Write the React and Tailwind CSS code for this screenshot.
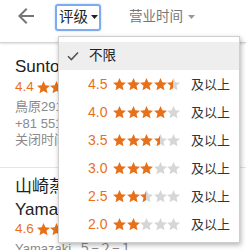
const STAR = "M12 2l2.9 6.6 7.1.6-5.4 4.7 1.6 7.1L12 17.3 5.8 21l1.6-7.1L2 9.2l7.1-.6z";

function Star({ fill, id, size }) {
  // fill: 1 full, 0.5 half, 0 empty
  return (
    <svg viewBox="2 2 20 20" className={size + " shrink-0"}>
      <defs>
        <linearGradient id={id}>
          <stop offset={fill * 100 + "%"} stopColor="#e7711b" />
          <stop offset={fill * 100 + "%"} stopColor="#d6d6d6" />
        </linearGradient>
      </defs>
      <path d={STAR} fill={`url(#${id})`} />
    </svg>
  );
}

function Stars({ value, id, size = "w-[13px] h-[13px]" }) {
  return (
    <span className="flex gap-[0.5px]">
      {[0, 1, 2, 3, 4].map((i) => {
        const f = value - i >= 1 ? 1 : value - i >= 0.5 ? 0.5 : 0;
        return <Star key={i} fill={f} id={`${id}-${i}`} size={size} />;
      })}
    </span>
  );
}

const font = { fontFamily: '"Liberation Sans", Arial, "Noto Sans CJK SC", sans-serif' };

function Caret({ color }) {
  return (
    <svg width="7" height="4" viewBox="0 0 7 4">
      <path d="M0 0h7L3.5 4z" fill={color} />
    </svg>
  );
}

export default function App() {
  const ratings = [4.5, 4.0, 3.5, 3.0, 2.5, 2.0];
  return (
    <div className="relative w-[246px] h-[250px] overflow-hidden bg-white" style={font}>
      {/* header */}
      <div className="h-[43px] border-b border-[#d4d4d4] shadow-[0_1px_2px_rgba(0,0,0,0.12)]">
        <div className="h-[34px] flex items-center">
          <svg viewBox="0 0 24 24" className="w-6 h-6 ml-[14px] -mt-[2px]" fill="#757575">
            <path d="M20 11H7.83l5.59-5.59L12 4l-8 8 8 8 1.41-1.41L7.83 13H20v-2z" />
          </svg>
          <div className="ml-[17px] h-[27px] flex items-center gap-[3px] pl-[2px] pr-[1px] border-2 border-[#7eaaf0] rounded-[3px] shadow-[0_0_2px_#a9c7f7]">
            <span className="text-[14.5px] leading-none text-[#222]">评级</span>
            <Caret color="#222" />
          </div>
          <div className="ml-[28px] flex items-center gap-[5px]">
            <span className="text-[13.5px] leading-none text-[#777]">营业时间</span>
            <Caret color="#999" />
          </div>
        </div>
      </div>

      {/* list */}
      <div className="px-[15px] pt-[14px] pb-[18px] border-b border-[#e4e4e4] whitespace-nowrap">
        <div className="text-[17px] leading-[20px] text-[#212121]">Suntory Hakushu Distillery</div>
        <div className="flex items-center gap-[3px] h-[20px]">
          <span className="text-[13.5px] text-[#e7711b]">4.4</span>
          <Stars value={4.5} id="s1" />
        </div>
        <div className="mt-[2px] text-[13px] leading-[16.5px] text-[#8a8a8a]">
          <div>鳥原2913-1</div>
          <div>+81 551-35-2211</div>
          <div>关闭时间：16:30</div>
        </div>
      </div>
      <div className="px-[15px] pt-[7px] whitespace-nowrap">
        <div className="text-[17px] leading-[23px] text-[#212121]">
          <div>山崎蒸溜所</div>
          <div>Yamazaki Distillery</div>
        </div>
        <div className="flex items-center gap-[3px] h-[18px]">
          <span className="text-[13.5px] text-[#e7711b]">4.6</span>
          <Stars value={4.5} id="s2" />
        </div>
        <div className="text-[13px] leading-[20px] text-[#8a8a8a]">Yamazaki, ５−２−１</div>
      </div>

      {/* dropdown menu */}
      <div className="absolute left-[58px] top-[36px] w-[182px] bg-white border border-[#cfcfcf] shadow-[1px_2px_5px_rgba(0,0,0,0.3)] pt-[5px] pb-[4px]">
        <div className="h-[28px] flex items-center bg-[#eeeeee]">
          <span className="w-[30px] pl-[8px] flex">
            <svg width="12" height="10" viewBox="0 0 12 10">
              <path d="M1 5.2l3.4 3.3L11 1.5" fill="none" stroke="#555" strokeWidth="1.6" />
            </svg>
          </span>
          <span className="text-[13.5px] leading-none text-[#222]">不限</span>
        </div>
        {ratings.map((r) => (
          <div key={r} className="h-[28px] flex items-center pl-[29px]">
            <span className="w-[25px] text-[14px] leading-none text-[#e7711b]">{r.toFixed(1)}</span>
            <Stars value={r} id={`m${r * 10}`} />
            <span className="ml-[11px] text-[13px] leading-none text-[#333]">及以上</span>
          </div>
        ))}
      </div>
    </div>
  );
}
